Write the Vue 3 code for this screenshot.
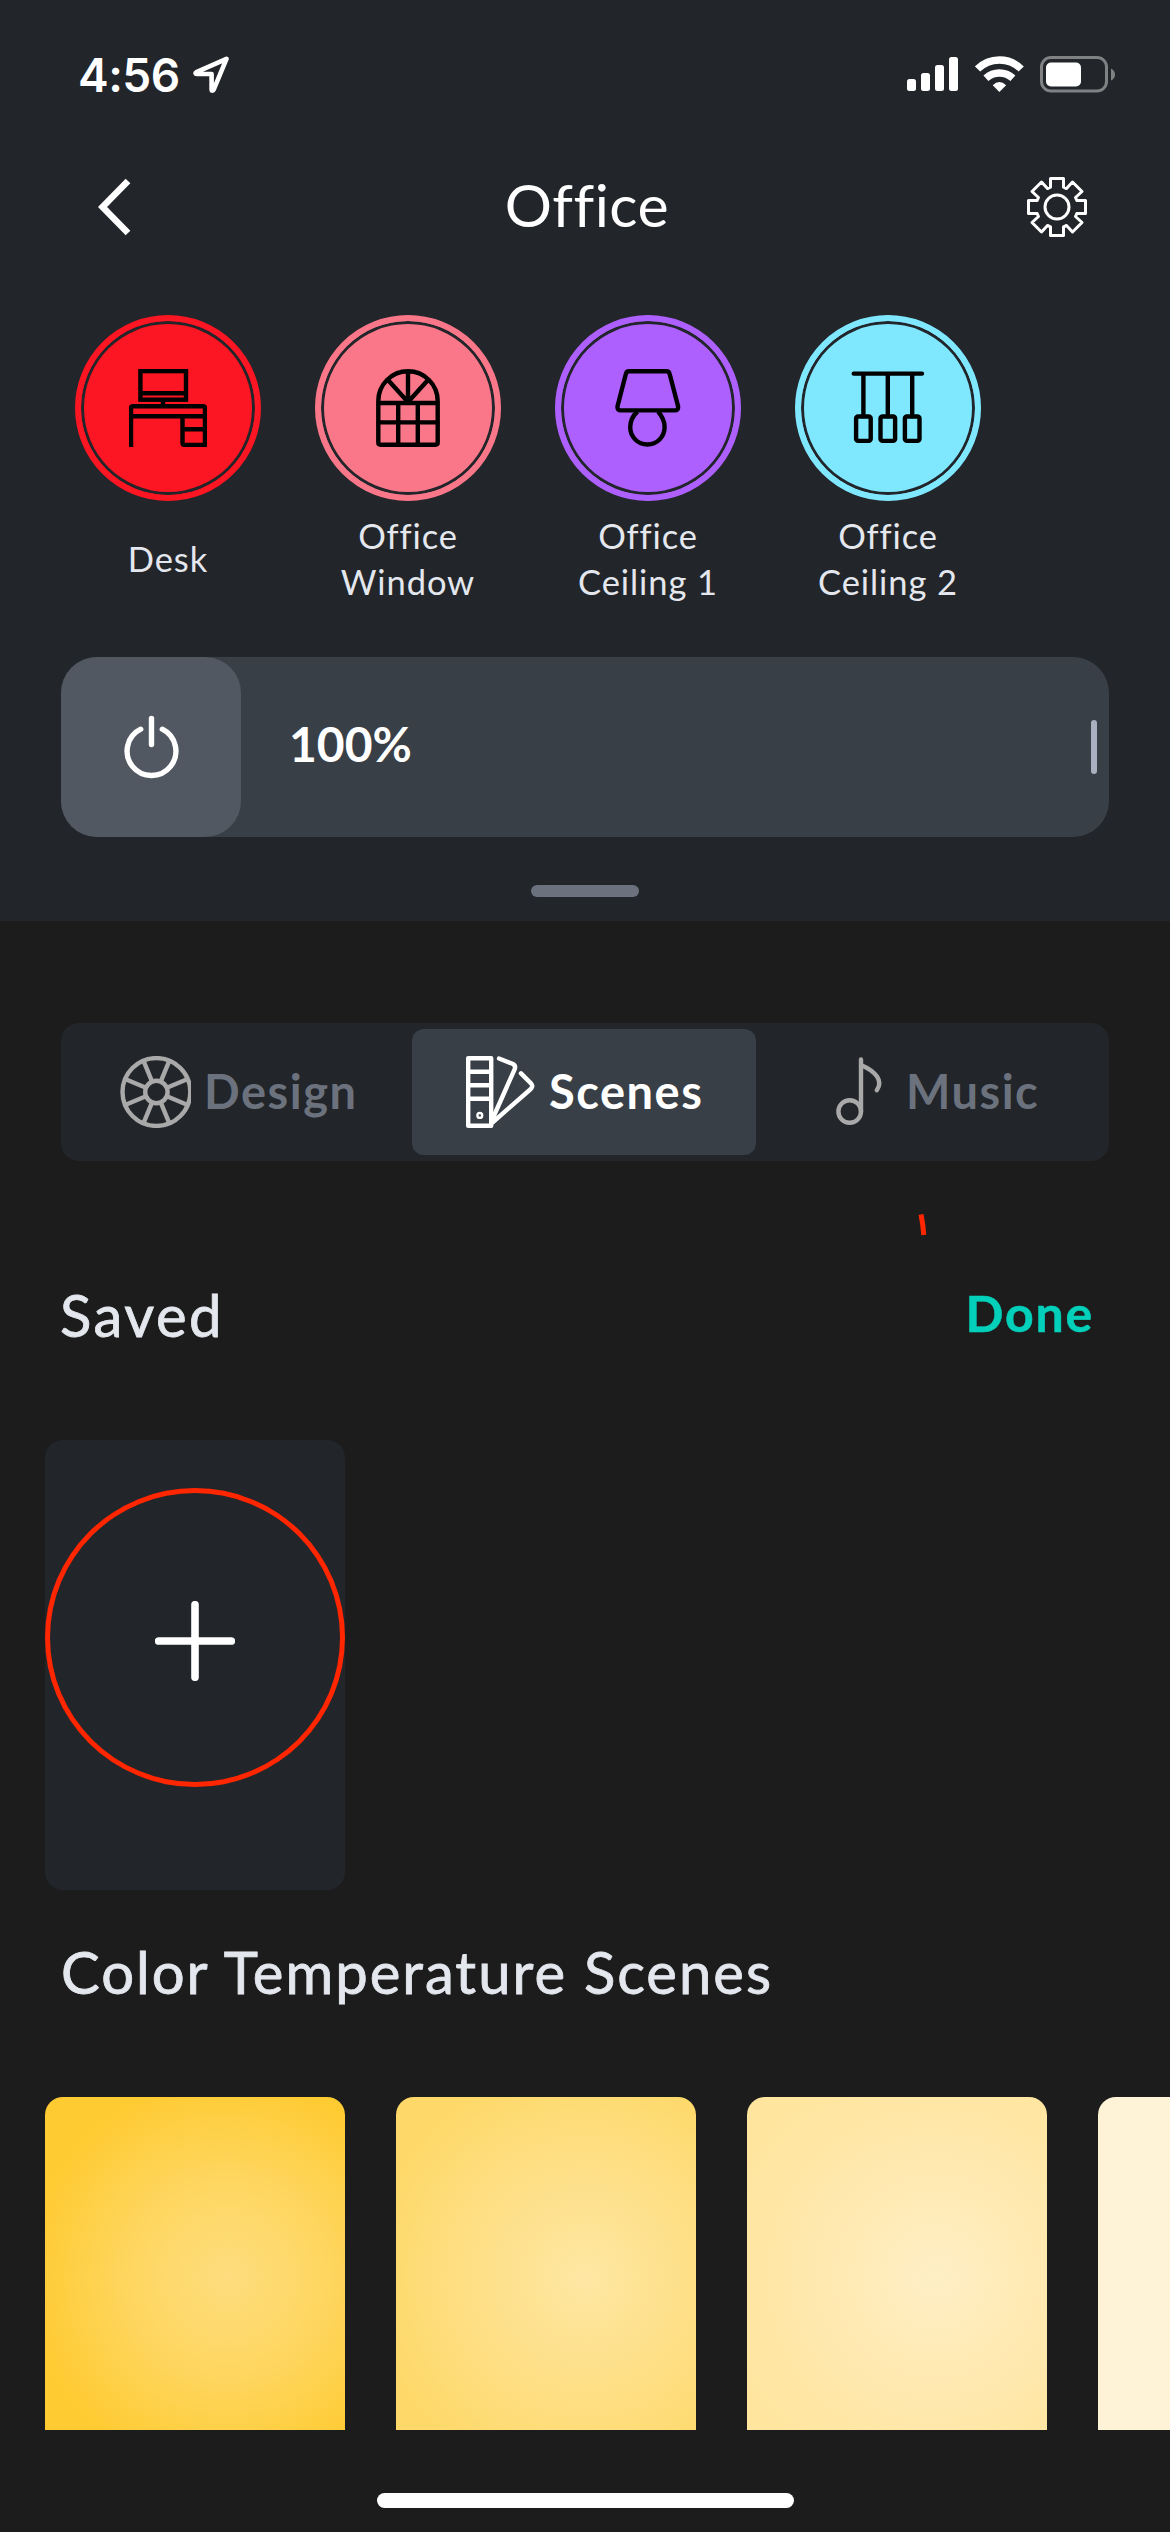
<template>
  <div class="screen">
    <header class="panel">
      <div class="status-bar">
        <span class="clock">4:56</span>
        <svg class="location" width="37" height="37" viewBox="0 0 37 37" aria-hidden="true">
          <path d="M33.5 2.8 3.4 16.2C2 17 2.4 18 3.8 18H18.6V33.2C18.6 35 20 35 20.8 33.4Z" />
        </svg>
        <div class="status-icons">
          <svg width="51" height="36" viewBox="0 0 51 36" fill="#fff" aria-hidden="true">
            <rect x="0" y="23" width="9" height="12" rx="2.5" />
            <rect x="14" y="17" width="9" height="18" rx="2.5" />
            <rect x="28" y="9" width="9" height="26" rx="2.5" />
            <rect x="42" y="1" width="9" height="34" rx="2.5" />
          </svg>
          <svg class="wifi" width="49" height="37" viewBox="0 0 49 37" fill="none" stroke="#fff" stroke-width="7.4" aria-hidden="true">
            <path d="M2.6 13A30.9 30.9 0 0 1 46.2 13" />
            <path d="M10.9 22.2A20.2 20.2 0 0 1 37.9 22.2" />
            <path d="M17.7 29.2Q24.4 22.8 31.1 29.2L24.4 36Z" fill="#fff" stroke="none" />
          </svg>
          <svg width="76" height="37" viewBox="0 0 76 37" aria-hidden="true">
            <rect x="1.5" y="1.5" width="65" height="33.5" rx="9.5" fill="none" stroke="#7f8183" stroke-width="3" />
            <rect x="6" y="6.5" width="35" height="24" rx="5" fill="#fff" />
            <path d="M71 12.5Q75 14.5 75 18.5Q75 22.5 71 24.5Z" fill="#7f8183" />
          </svg>
        </div>
      </div>

      <nav class="nav-bar">
        <svg class="back" width="34" height="58" viewBox="0 0 34 58" aria-label="Back">
          <path d="M30 3 4.5 29 30 55" />
        </svg>
        <h1 class="title">Office</h1>
        <svg class="gear" width="62" height="62" viewBox="-31 -31 62 62" aria-label="Settings">
          <path
            d="M-6.5-28.5H6.5V-19.8L9.5-18.5 15.5-25 25-15.5 18.5-9.5 19.8-6.5H28.5V6.5H19.8L18.5 9.5 25 15.5 15.5 25 9.5 18.5 6.5 19.8V28.5H-6.5V19.8L-9.5 18.5-15.5 25-25 15.5-18.5 9.5-19.8 6.5H-28.5V-6.5H-19.8L-18.5-9.5-25-15.5-15.5-25-9.5-18.5-6.5-19.8Z"
          />
          <circle r="12" />
        </svg>
      </nav>

      <ul class="lights">
        <li v-for="light in lights" :key="light.id" class="light">
          <div class="bulb" :class="light.id">
            <svg v-if="light.id === 'desk'" width="78" height="78" viewBox="0 0 78 78">
              <rect x="11.4" y="2.1" width="45.6" height="28.6" />
              <path d="M11.4 24.3H57M34 31V36M2 78V39.2Q2 37.2 4 37.2H74Q76 37.2 76 39.2V76H56Q53.5 76 53.5 73.5V47.3M2 47.3H76M53.5 60.2H76" />
            </svg>
            <svg v-else-if="light.id === 'window'" width="64" height="78" viewBox="0 0 64 78">
              <path d="M2.3 32A29.7 29.7 0 0 1 61.7 32V73.5Q61.7 75.7 59.5 75.7H4.5Q2.3 75.7 2.3 73.5ZM2.3 34H61.7M2.3 53.4H61.7M22.2 34V76M41.8 34V76M32 34V2M32 33 12 11M32 33 52 11" />
            </svg>
            <svg v-else-if="light.id === 'ceiling-1'" width="66" height="78" viewBox="0 0 66 78">
              <path d="M14 2.2H51.5Q54 2.2 54.6 4.8L63 37Q63.8 41.4 59.6 41.4H6Q1.8 41.4 2.6 37L10.9 4.8Q11.5 2.2 14 2.2Z" />
              <path d="M22.5 42.5C17 47.5 15.2 53 15.2 58.3A17.2 17.2 0 0 0 49.6 58.3C49.6 53 47.5 47.5 43 42.5" />
            </svg>
            <svg v-else width="74" height="74" viewBox="0 0 74 74">
              <path d="M2.7 2.6H71M12.4 3V45M36.8 3V45M61.2 3V45" stroke-linecap="round" />
              <rect x="5.1" y="45.5" width="14.6" height="24.4" rx="2" />
              <rect x="29.5" y="45.5" width="14.6" height="24.4" rx="2" />
              <rect x="53.9" y="45.5" width="14.6" height="24.4" rx="2" />
            </svg>
          </div>
          <p class="light-name">
            <span v-for="line in light.lines" :key="line">{{ line }}</span>
          </p>
        </li>
      </ul>

      <div class="slider">
        <button class="power" aria-label="Power">
          <svg width="56" height="64" viewBox="0 0 56 64">
            <path d="M17.7 14.2A24.4 24.4 0 1 0 39.3 14.2M28.5 3.5V29.5" />
          </svg>
        </button>
        <span class="level">{{ brightness }}%</span>
        <span class="thumb"></span>
      </div>

      <div class="grabber"></div>
    </header>

    <main class="content">
      <div class="tabs">
        <div class="tab design">
          <svg width="71" height="72" viewBox="0 0 71 72">
            <circle cx="36.4" cy="36" r="33.9" />
            <circle cx="36.4" cy="36" r="11.2" />
            <path
              v-for="n in 8"
              :key="n"
              d="M49 36H69"
              :transform="`rotate(${n * 45 - 22.5} 36.4 36)`"
            />
          </svg>
          <span>Design</span>
        </div>
        <div class="tab scenes">
          <svg width="69" height="72" viewBox="0 0 69 72" stroke-linecap="round" stroke-linejoin="round">
            <path d="M2.2 2.2H25.2V69.8H2.2ZM2.2 15.7H25.2M2.2 29.3H25.2M2.2 42.8H25.2" />
            <circle cx="13.8" cy="59.4" r="2.4" stroke-width="2.4" />
            <path d="M33 2.5 46.5 7.8Q50.2 9.6 48.6 13.4L26.5 63M55 17.4 65 27.4Q67.5 30.2 64.8 33L26.5 66.5" />
          </svg>
          <span>Scenes</span>
        </div>
        <div class="tab music">
          <svg width="46" height="70" viewBox="0 0 46 70" stroke-linecap="round">
            <circle cx="13.7" cy="54.5" r="11.3" />
            <path d="M25 2.5V54.5M25 8C40 14.5 47.5 24 40.8 33.2" />
          </svg>
          <span>Music</span>
        </div>
      </div>

      <svg class="stray-mark" width="9" height="22" viewBox="0 0 9 22" aria-hidden="true">
        <path d="M3 .4Q5 10 5.8 21" />
      </svg>

      <div class="section-head">
        <h2 class="saved">Saved</h2>
        <span class="done">Done</span>
      </div>

      <div class="add-card">
        <svg width="80" height="80" viewBox="0 0 80 80" aria-label="Add scene">
          <path d="M40 3.7V76.3M3.7 40H76.3" />
        </svg>
        <div class="highlight"></div>
      </div>

      <h2 class="temperature">Color Temperature Scenes</h2>

      <div class="swatches">
        <div v-for="tone in tones" :key="tone" class="swatch" :class="tone"></div>
      </div>
    </main>

    <div class="home-indicator"></div>
  </div>
</template>

<script setup>
import { ref } from 'vue'

const brightness = ref(100)

const lights = [
  { id: 'desk', lines: ['Desk'] },
  { id: 'window', lines: ['Office', 'Window'] },
  { id: 'ceiling-1', lines: ['Office', 'Ceiling 1'] },
  { id: 'ceiling-2', lines: ['Office', 'Ceiling 2'] }
]

const tones = ['amber', 'warm', 'soft', 'cream']
</script>

<style>
body {
  background: #1c1c1c;
}
</style>

<style scoped>
.screen {
  display: flex;
  flex-direction: column;
  width: 1170px;
  height: 2532px;
  overflow: hidden;
  background: #1c1c1c;
  color: #fff;
  font-family: Lato, "Liberation Sans", sans-serif;
}

h1,
h2,
p,
ul {
  margin: 0;
  padding: 0;
  font-weight: 400;
}

svg {
  display: block;
  flex: none;
}

.panel {
  box-sizing: border-box;
  height: 921px;
  flex: none;
  background: #22252a;
}

.status-bar {
  display: flex;
  align-items: center;
  height: 149px;
  padding: 0 54px 0 78px;
}

.clock {
  width: 115px;
  font-family: Inter, sans-serif;
  font-size: 46px;
  font-weight: 600;
  letter-spacing: -0.5px;
}

.location {
  fill: none;
  stroke: #fff;
  stroke-width: 4.6;
  stroke-linejoin: round;
}

.status-icons {
  display: flex;
  margin-left: auto;
}

.wifi {
  margin: 0 16px 0 17px;
}

.nav-bar {
  display: flex;
  align-items: center;
  justify-content: space-between;
  height: 116px;
  padding: 0 82px 0 98px;
}

.back {
  margin-right: 16px;
  fill: none;
  stroke: #fff;
  stroke-width: 6.6;
}

.title {
  padding-bottom: 5px;
  font-size: 59px;
  line-height: 70px;
  letter-spacing: 0.5px;
}

.gear {
  fill: none;
  stroke: #fff;
  stroke-width: 3;
  stroke-linejoin: round;
}

.lights {
  display: flex;
  height: 343px;
  margin-top: 50px;
  padding-left: 48px;
  list-style: none;
}

.light {
  width: 240px;
}

.bulb {
  display: flex;
  align-items: center;
  justify-content: center;
  box-sizing: border-box;
  width: 186px;
  height: 186px;
  margin: 0 auto;
  border: 6px solid;
  border-radius: 50%;
  box-shadow: inset 0 0 0 3px #22252a;
}

.bulb svg {
  fill: none;
  stroke: #000;
  stroke-width: 4.4;
}

.bulb.desk {
  background: #fc1522;
  border-color: #fc1522;
}

.bulb.window {
  background: #f97788;
  border-color: #f97788;
}

.bulb.ceiling-1 {
  background: #ae60ff;
  border-color: #ae60ff;
}

.bulb.ceiling-2 {
  background: #7fe8ff;
  border-color: #7fe8ff;
}

.light-name {
  display: flex;
  flex-direction: column;
  justify-content: center;
  height: 92px;
  margin-top: 12px;
  color: #e4e8ee;
  font-size: 34.5px;
  line-height: 46px;
  letter-spacing: 0.9px;
  text-align: center;
}

.slider {
  display: flex;
  align-items: center;
  width: 1048px;
  height: 180px;
  margin: -1px 0 0 61px;
  border-radius: 36px;
  background: #393f47;
}

.power {
  display: flex;
  align-items: center;
  justify-content: center;
  width: 180px;
  height: 180px;
  padding: 0;
  border: 0;
  border-radius: 36px;
  background: #515862;
}

.power svg {
  fill: none;
  stroke: #fff;
  stroke-width: 5.4;
  stroke-linecap: round;
}

.level {
  margin: -7px 0 0 48px;
  font-size: 48px;
  font-weight: 700;
}

.thumb {
  width: 6px;
  height: 54px;
  margin: 0 12px 0 auto;
  border-radius: 3px;
  background: #a9b1c1;
}

.grabber {
  width: 108px;
  height: 12px;
  margin: 48px auto 0;
  border-radius: 6px;
  background: #6b727e;
}

.content {
  position: relative;
  height: 1509px;
  flex: none;
  overflow: hidden;
}

.tabs {
  display: flex;
  box-sizing: border-box;
  width: 1048px;
  height: 138px;
  margin: 102px 0 0 61px;
  padding: 6px;
  border-radius: 18px;
  background: #22252a;
}

.tab {
  display: flex;
  align-items: center;
  box-sizing: border-box;
  color: #6b727e;
  font-size: 47px;
  font-weight: 700;
  letter-spacing: 1.5px;
}

.tab svg {
  fill: none;
  stroke: #a9a9a9;
  stroke-width: 4.4;
}

.tab span {
  margin-top: -2px;
}

.design {
  width: 345px;
  padding-left: 53px;
  gap: 13px;
}

.scenes {
  width: 344px;
  padding-left: 54px;
  gap: 14px;
  border-radius: 12px;
  background: #393f47;
  color: #fff;
}

.scenes svg {
  stroke: #fff;
}

.music {
  padding-left: 80px;
  gap: 24px;
}

/* leftover pen stroke lying over the page */
.stray-mark {
  position: absolute;
  top: 293px;
  left: 918px;
  fill: none;
  stroke: #ff2600;
  stroke-width: 5;
}

.section-head {
  display: flex;
  align-items: flex-start;
  justify-content: space-between;
  height: 84px;
  margin-top: 116px;
  padding: 0 76px 0 60px;
}

.saved,
.temperature {
  color: #e4e8ee;
  font-size: 58px;
  line-height: 76px;
  -webkit-text-stroke: 0.8px #e4e8ee;
}

.saved {
  letter-spacing: 2.5px;
}

.done {
  color: #03d0ba;
  font-size: 50px;
  font-weight: 700;
  line-height: 72px;
  letter-spacing: 1.8px;
  -webkit-text-stroke: 0.5px #03d0ba;
}

.add-card {
  display: flex;
  position: relative;
  align-items: center;
  justify-content: center;
  box-sizing: border-box;
  width: 300px;
  height: 450px;
  margin: 79px 0 0 45px;
  padding-bottom: 48px;
  border-radius: 18px;
  background: #22252a;
}

.add-card svg {
  fill: none;
  stroke: #fff;
  stroke-width: 7.6;
  stroke-linecap: round;
}

.highlight {
  position: absolute;
  top: 48px;
  left: 0;
  box-sizing: border-box;
  width: 300px;
  height: 299px;
  border: 5px solid #ff2600;
  border-radius: 50%;
}

.temperature {
  margin: 44px 0 0 61px;
  letter-spacing: 2px;
}

.swatches {
  display: flex;
  gap: 51px;
  margin: 87px 0 0 45px;
}

.swatch {
  width: 300px;
  height: 450px;
  flex: none;
  border-radius: 18px;
}

.amber {
  background: radial-gradient(circle at 61% 40%, #fedd7e 0, #fed65f 100px, #ffcb32 200px, #ffcb32 250px);
}

.warm {
  background: radial-gradient(circle at 63% 40%, #fee7a3 0, #fedf85 115px, #fed96a 210px);
}

.soft {
  background: radial-gradient(circle at 63% 40%, #ffefc6 0, #ffe9b0 110px, #ffe59e 220px);
}

.cream {
  background: #fff3d7;
}

.home-indicator {
  width: 417px;
  height: 15px;
  margin: 63px auto 0;
  border-radius: 7.5px;
  background: #fff;
}
</style>
